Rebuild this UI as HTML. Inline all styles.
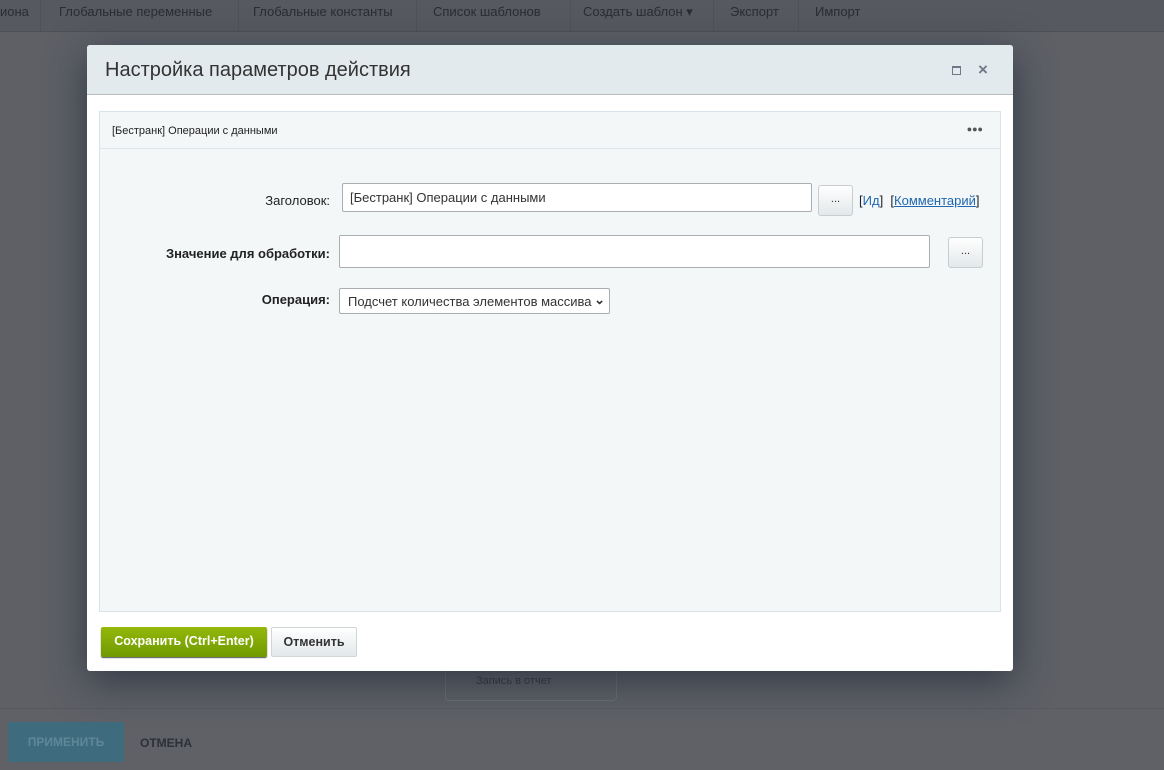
<!DOCTYPE html>
<html><head><meta charset="utf-8"><style>
*{box-sizing:border-box;margin:0;padding:0}
body{width:1164px;height:770px;overflow:hidden;background:#5e6066;font-family:"Liberation Sans","Noto Sans CJK SC",sans-serif;position:relative}
.top{position:absolute;left:0;top:0;width:1164px;height:32px;background:#56595f;border-bottom:1px solid #4e5156;font-size:13px;color:#2a2d33}
.top span{position:absolute;top:4px}
.sep{position:absolute;top:0;width:1px;height:32px;background:#4f5257}
.bottom{position:absolute;left:0;top:708px;width:1164px;height:62px;background:#5f6167;border-top:1px solid #585a60}
.apply{position:absolute;left:8px;top:722px;width:116px;height:40px;background:#3f6b7e;color:#5f8798;font-size:12px;font-weight:bold;text-align:center;line-height:40px;border-radius:2px}
.cancelb{position:absolute;left:140px;top:736px;font-size:12px;font-weight:bold;color:#2c3038}
.ghost{position:absolute;left:445px;top:671px;width:172px;height:30px;border:1px solid #6c6f75;border-top:none;border-radius:0 0 4px 4px;font-size:11px;color:#33363c;padding:4px 0 0 30px}
.dlg{position:absolute;left:87px;top:45px;width:926px;height:626px;background:#fff;border-radius:3px;box-shadow:0 10px 40px rgba(30,40,55,.7)}
.hd{height:50px;background:#e3eaed;border-bottom:1px solid #b8bcbf;border-radius:3px 3px 0 0;font-size:20px;color:#333;padding:14px 0 0 18px}
.panel{position:absolute;left:12px;top:66px;width:902px;height:501px;background:#f4f7f8;border:1px solid #d9e4ea}
.ph{height:37px;border-bottom:1px solid #dde7ec;font-size:11px;color:#222;padding:13px 0 0 12px}
.lbl{position:absolute;font-size:13px;color:#222;text-align:right}
.inp{position:absolute;background:#fff;border:1px solid #a9aeb3;border-radius:2px;font-size:13px;color:#333;padding:6px 7px}
.btn{position:absolute;width:35px;height:31px;border:1px solid #c8cdd1;border-radius:3px;background:linear-gradient(#fff,#e3e8ea);font-size:11px;text-align:center;line-height:26px;color:#333}
a{color:#2067b0}
.save{position:absolute;left:14px;top:582px;width:166px;height:30px;background:linear-gradient(#94b80a,#6f9a00);border-radius:2px;color:#fff;font-weight:bold;font-size:12.5px;text-align:center;line-height:29px;box-shadow:0 1px 1px #555}
.cnc{position:absolute;left:184px;top:582px;width:86px;height:30px;background:linear-gradient(#fff,#e3e8ea);border:1px solid #d0d5d8;border-radius:2px;color:#333;font-weight:bold;font-size:12.5px;text-align:center;line-height:28px}
</style></head><body>
<div class="top">
<span style="left:0">иона</span><div class="sep" style="left:40px"></div>
<span style="left:59px">Глобальные переменные</span><div class="sep" style="left:238px"></div>
<span style="left:253px">Глобальные константы</span><div class="sep" style="left:416px"></div>
<span style="left:433px">Список шаблонов</span><div class="sep" style="left:570px"></div>
<span style="left:583px">Создать шаблон ▾</span><div class="sep" style="left:713px"></div>
<span style="left:730px">Экспорт</span><div class="sep" style="left:798px"></div>
<span style="left:815px">Импорт</span>
</div>
<div class="ghost">Запись в отчет</div>
<div class="bottom"></div>
<div class="apply">ПРИМЕНИТЬ</div>
<div class="cancelb">ОТМЕНА</div>
<div class="dlg">
<div class="hd">Настройка параметров действия</div>
<div style="position:absolute;left:865px;top:21px;width:9px;height:9px;border:1px solid #6f7a88;border-top-width:2px"></div>
<div style="position:absolute;left:891px;top:15px;font-size:17px;color:#6f7a88;font-weight:bold">×</div>
<div class="panel">
<div class="ph">[Бестранк] Операции с данными</div>
<div style="position:absolute;right:17px;top:12px;font-size:9px;color:#555;letter-spacing:0">●●●</div>
<div class="lbl" style="left:140px;width:90px;top:81px">Заголовок:</div>
<div class="inp" style="left:242px;top:71px;width:470px;height:29px;padding-top:6px">[Бестранк] Операции с данными</div>
<div class="btn" style="left:718px;top:73px">...</div>
<div style="position:absolute;left:759px;top:81px;font-size:13px;color:#222">[<a>Ид</a>] &nbsp;[<a style="text-decoration:underline">Комментарий</a>]</div>
<div class="lbl" style="left:40px;width:190px;top:134px;font-weight:bold">Значение для обработки:</div>
<div class="inp" style="left:239px;top:123px;width:591px;height:33px"></div>
<div class="btn" style="left:848px;top:125px">...</div>
<div class="lbl" style="left:140px;width:90px;top:180px;font-weight:bold">Операция:</div>
<div class="inp" style="left:239px;top:176px;width:271px;height:26px;padding:5px 8px;font-size:13px">Подсчет количества элементов массива <span style="position:absolute;right:4px;top:3px;font-weight:bold">⌄</span></div>
</div>
<div class="save">Сохранить (Ctrl+Enter)</div>
<div class="cnc">Отменить</div>
</div>
</body></html>
